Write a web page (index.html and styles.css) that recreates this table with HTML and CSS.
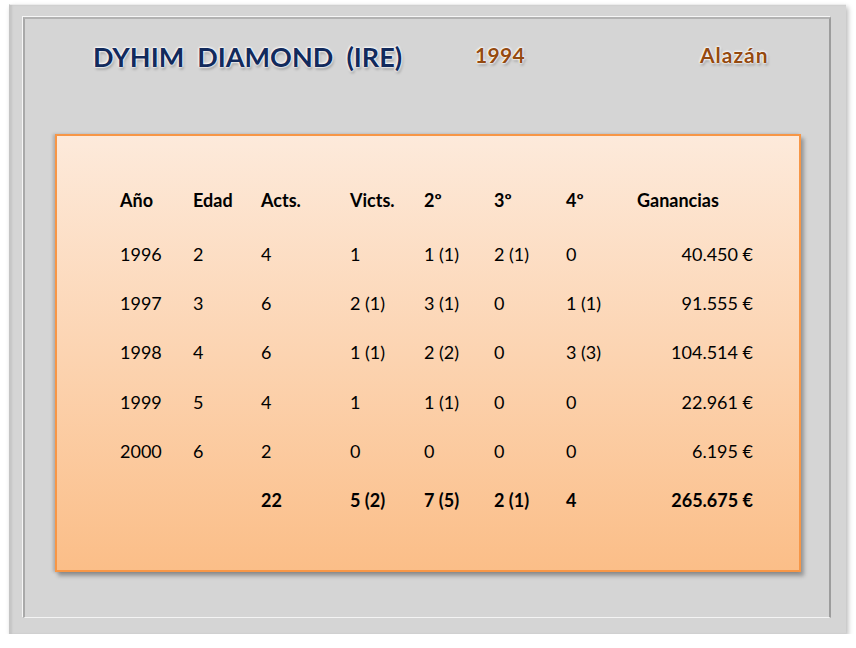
FILE: index.html
```html
<!DOCTYPE html>
<html lang="es">
<head>
<meta charset="utf-8">
<title>Dyhim Diamond (IRE)</title>
<link rel="stylesheet" href="styles.css">
</head>
<body>
<div class="outer">
  <div class="inner">
    <div class="head">
      <div class="name">DYHIM  DIAMOND  (IRE)</div>
      <div class="year">1994</div>
      <div class="coat">Alazán</div>
    </div>
    <div class="card">
      <div class="grid">
        <div class="h">Año</div><div class="h">Edad</div><div class="h">Acts.</div><div class="h">Victs.</div><div class="h">2º</div><div class="h">3º</div><div class="h">4º</div><div class="h">Ganancias</div>

        <div>1996</div><div>2</div><div>4</div><div>1</div><div>1 (1)</div><div>2 (1)</div><div>0</div><div class="r">40.450 €</div>
        <div>1997</div><div>3</div><div>6</div><div>2 (1)</div><div>3 (1)</div><div>0</div><div>1 (1)</div><div class="r">91.555 €</div>
        <div>1998</div><div>4</div><div>6</div><div>1 (1)</div><div>2 (2)</div><div>0</div><div>3 (3)</div><div class="r">104.514 €</div>
        <div>1999</div><div>5</div><div>4</div><div>1</div><div>1 (1)</div><div>0</div><div>0</div><div class="r">22.961 €</div>
        <div>2000</div><div>6</div><div>2</div><div>0</div><div>0</div><div>0</div><div>0</div><div class="r">6.195 €</div>
        <div class="b"></div><div class="b"></div><div class="b">22</div><div class="b">5 (2)</div><div class="b">7 (5)</div><div class="b">2 (1)</div><div class="b">4</div><div class="b r">265.675 €</div>
      </div>
    </div>
  </div>
</div>
</body>
</html>
```

FILE: styles.css
```css
* { box-sizing: border-box; }
html, body { margin: 0; padding: 0; background: #ffffff; }
body { font-family: Lato, "Open Sans", sans-serif; color: #000; }

.outer {
  margin: 4px 0 0 9px;
  width: 837px;
  height: 630px;
  background: #d5d5d5;
  border-top: 1px solid #ececec;
  border-left: 1px solid #c4c4c4;
  box-shadow: 2px 3px 5px rgba(0,0,0,0.28), inset 2px 0 2px rgba(0,0,0,0.08);
  padding: 12px 0 0 13px;
}

.inner {
  width: 808px;
  height: 601px;
  border-top: 2px solid #b2b2b2;
  border-left: 2px solid #a9a9a9;
  border-right: 2px solid #9c9c9c;
  border-bottom: 1px solid #f4f4f4;
  box-shadow: -1px -1px 0 #f6f6f6;
  padding: 21px 0 0 0;
}

.head {
  display: flex;
  align-items: flex-start;
  padding-left: 68px;
  height: 33.6px;
}
.name {
  width: 382px;
  white-space: pre;
  font-size: 27px;
  line-height: 1.2;
  font-weight: 700;
  margin-top: 0.6px;
  color: #122a5c;
  text-shadow: 0 0 1px #fff, 0 0 2px #fff, 0 0 3px #fff, 0 0 3px #fff, 1px 2px 3px rgba(0,0,0,0.4);
}
.year, .coat {
  margin-top: 1.8px;
  font-size: 21px;
  line-height: 1.2;
  font-weight: 700;
  color: #944a10;
  text-shadow: 0 0 1px #fff, 0 0 2px #fff, 0 0 3px #fff, 0 0 3px #fff, 1px 2px 3px rgba(0,0,0,0.4);
}
.year { width: 225px; letter-spacing: 0.3px; }
.coat { letter-spacing: 1px; }

.card {
  margin: 60px 0 0 30px;
  width: 746px;
  height: 438px;
  border: 2px solid #f79646;
  background: linear-gradient(#fdeadb, #fbbe88);
  box-shadow: -2px 0 3px rgba(0,0,0,0.18), 3px 4px 4px rgba(0,0,0,0.3);
  padding: 40px 0 0 63px;
}

.grid {
  display: grid;
  grid-template-columns: 73px 68px 89px 74px 70px 72px 71px 116px;
  grid-template-rows: 54.3px repeat(6, 49.3px);
  font-size: 18px;
  line-height: 49.3px;
  white-space: nowrap;
}
.grid .h { font-weight: 700; }
.grid .r { text-align: right; }
.grid .b { font-weight: 700; }
```
